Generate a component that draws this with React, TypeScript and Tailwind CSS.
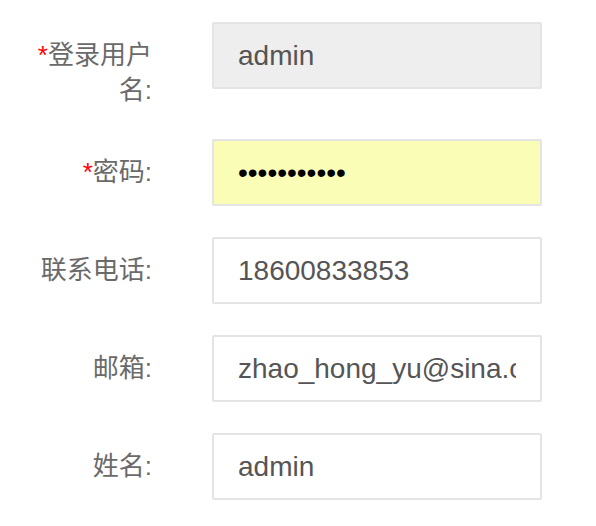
const rows = [
  { label: '登录用户名:', value: 'admin', required: true, variant: 'disabled' },
  { label: '密码:', value: '•••••••••••', required: true, variant: 'password' },
  { label: '联系电话:', value: '18600833853', required: false, variant: 'normal' },
  { label: '邮箱:', value: 'zhao_hong_yu@sina.cn', required: false, variant: 'normal' },
  { label: '姓名:', value: 'admin', required: false, variant: 'normal' },
] as const

const FONT = "font-['Liberation_Sans','Noto_Sans_CJK_SC',sans-serif]"

function Field({ label, value, required, variant }: (typeof rows)[number]) {
  const box =
    variant === 'disabled'
      ? 'bg-[#eeeeee]'
      : variant === 'password'
        ? 'bg-[#f9fdb5]'
        : 'bg-white'
  return (
    <div className="flex items-start mb-[31px]">
      <div className="w-[120px] ml-[32px] pt-[16px] text-right text-[26px] leading-[35px] text-[#6a6a6a]">
        {required && <span className="text-[#ff0000]">*</span>}
        {label}
      </div>
      <div className={`ml-[60px] w-[330px] h-[67px] border-2 border-[#e4e4e4] rounded-[2px] px-[24px] flex items-center ${box}`}>
        <span
          className={`block overflow-hidden whitespace-nowrap text-[28px] ${
            variant === 'password' ? 'text-black' : 'text-[#555]'
          }`}
        >
          {value}
        </span>
      </div>
    </div>
  )
}

export default function App() {
  return (
    <div className={`w-[596px] h-[526px] bg-white pt-[22px] ${FONT}`}>
      {rows.map((r) => (
        <Field key={r.label} {...r} />
      ))}
    </div>
  )
}
